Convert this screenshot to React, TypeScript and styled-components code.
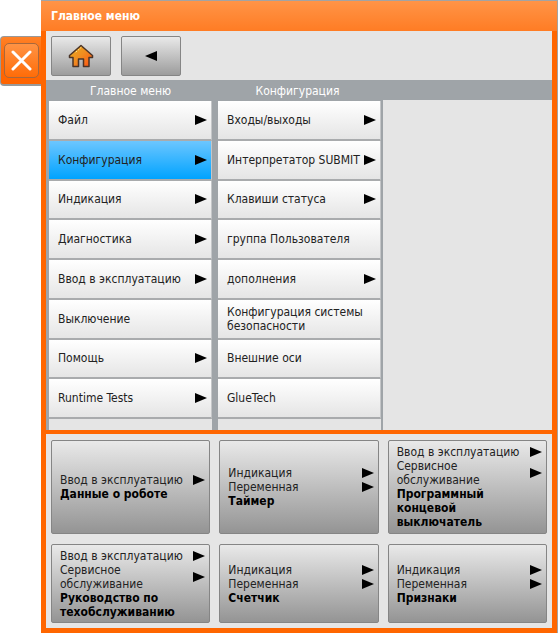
import React from "react";
import styled, { createGlobalStyle } from "styled-components";

const Global = createGlobalStyle`
  *, *::before, *::after { box-sizing: border-box; }
  body {
    margin: 0;
    background: #fff;
    color: #222;
    font-family: "DejaVu Sans Condensed", "Noto Sans", sans-serif;
    font-size: 12px;
    line-height: 14px;
  }
  button { font: inherit; color: inherit; cursor: pointer; }
`;

const Page = styled.div`
  display: flex;
  align-items: flex-start;
  min-height: 100vh;
`;

const CloseTab = styled.div`
  flex: none;
  width: 41px;
  margin-top: 36px;
  padding: 6px 2px 6px 3px;
  border: solid #999;
  border-width: 1px 0 2px 1px;
  border-radius: 4px 0 0 4px;
  background: linear-gradient(#ff8228, #ff6a08 40%, #ff6400);
`;

const CloseButton = styled.button`
  display: grid;
  place-items: center;
  width: 35px;
  height: 35px;
  padding: 0;
  border: 1px solid #a8683c;
  border-radius: 5px;
  background: linear-gradient(#ff9344, #ff6c08);
`;

const Panel = styled.main`
  flex: 1;
  min-width: 0;
  min-height: 100vh;
  display: flex;
  flex-direction: column;
  border: solid #a3a3a3;
  border-width: 1px 1px 0 0;
  background: #ff6600;
`;

const TitleBar = styled.h1`
  margin: 0;
  height: 30px;
  padding: 7px 10px;
  background: linear-gradient(#ff9447, #ff7c24);
  color: #fff;
  font-size: 12px;
  line-height: 16px;
  font-weight: 700;
`;

const Body = styled.div`
  flex: 1;
  display: flex;
  flex-direction: column;
  gap: 4px;
  padding: 0 5px;
  border-bottom: 5px solid #ff6600;
`;

const MenuArea = styled.section`
  flex: 1;
  display: flex;
  flex-direction: column;
  background: #e5e5e5;
`;

const Toolbar = styled.div`
  display: flex;
  gap: 10px;
  padding: 5px 5px 4px;
`;

const ToolButton = styled.button`
  display: grid;
  place-items: center;
  width: 60px;
  height: 40px;
  padding: 0;
  border: 1px solid #858585;
  border-radius: 2px;
  background: linear-gradient(#e9e9e9, #9c9c9c);
`;

const Columns = styled.div`
  flex: 1;
  display: grid;
  grid-template-columns: 169fr 165fr 169fr;
  grid-template-rows: 20px 1fr;
  padding-left: 3px;
  background: #9fa4a8;
`;

const ColumnTitle = styled.h2`
  margin: 0;
  padding-right: 6px;
  color: #fff;
  font-size: 12px;
  line-height: 22px;
  font-weight: 400;
  text-align: center;
`;

const Column = styled.div<{ $divider: number }>`
  border-right: ${(p) => p.$divider}px solid #9fa4a8;
  background: #e5e5e5;
`;

const MenuList = styled.div`
  display: grid;
  grid-auto-rows: 1fr;
  height: 319px;
  border-top: 1px solid #9fa4a8;
`;

const MenuButton = styled.button<{ $active?: boolean }>`
  display: flex;
  align-items: center;
  justify-content: space-between;
  gap: 2px;
  min-width: 0;
  padding: 0 4px 0 9px;
  border: solid #a9abad;
  border-width: 0 1px 2px 0;
  border-right-color: #c4c6c8;
  background: ${(p) =>
    p.$active ? "linear-gradient(#6cc6ff, #00a3ff)" : "linear-gradient(#ffffff, #e5e5e5)"};
  text-align: left;
`;

const Shortcuts = styled.section`
  display: grid;
  grid-template-columns: repeat(3, 1fr);
  grid-template-rows: 94px 79px;
  gap: 10px 9px;
  padding: 6px 5px 5px;
  background: #e5e5e5;
`;

const Card = styled.button`
  display: flex;
  flex-direction: column;
  justify-content: center;
  min-width: 0;
  padding: 0 4px 0 8px;
  border: 1px solid #858585;
  border-radius: 2px;
  background: linear-gradient(#e9e9e9, #949494);
  text-align: left;
`;

const PathLine = styled.span`
  display: flex;
  align-items: center;
  justify-content: space-between;
  width: 100%;
  gap: 8px;
`;

const Target = styled.strong`
  max-width: 128px;
  color: #000;
`;

const ArrowIcon = styled.svg`
  flex: none;
  display: block;
`;

const Arrow = ({ left = false }: { left?: boolean }) => (
  <ArrowIcon width="12" height="10" viewBox="0 0 12 10" aria-hidden="true">
    <path d={left ? "M12 0v10L0 5z" : "M0 0v10l12-5z"} fill="#000" />
  </ArrowIcon>
);

const HomeIcon = () => (
  <svg width="26" height="24" viewBox="0 0 26 24" aria-hidden="true">
    <defs>
      <linearGradient id="roof" x1="0" y1="0" x2="1" y2="1">
        <stop offset="0" stopColor="#e8b020" />
        <stop offset="0.5" stopColor="#f08c20" />
        <stop offset="1" stopColor="#ff4e10" />
      </linearGradient>
    </defs>
    <path
      d="M13 1.500 1.500 11.500V13.500H5V22.500H10.500V15H15.500V22.500H21V13.500H24.500V11.500Z"
      fill="url(#roof)"
      stroke="#4a3428"
      strokeWidth="1.500"
      strokeLinejoin="round"
    />
    <path d="m8 8 5-4.500" stroke="#ffe894" strokeWidth="1" strokeLinecap="round" strokeDasharray="1 2" />
  </svg>
);

type Item = { label: string; sub?: boolean; active?: boolean };

const mainMenu: Item[] = [
  { label: "Файл", sub: true },
  { label: "Конфигурация", sub: true, active: true },
  { label: "Индикация", sub: true },
  { label: "Диагностика", sub: true },
  { label: "Ввод в эксплуатацию", sub: true },
  { label: "Выключение" },
  { label: "Помощь", sub: true },
  { label: "Runtime Tests", sub: true },
];

const configMenu: Item[] = [
  { label: "Входы/выходы", sub: true },
  { label: "Интерпретатор SUBMIT", sub: true },
  { label: "Клавиши статуса", sub: true },
  { label: "группа Пользователя" },
  { label: "дополнения", sub: true },
  { label: "Конфигурация системы безопасности" },
  { label: "Внешние оси" },
  { label: "GlueTech" },
];

const shortcuts = [
  { path: ["Ввод в эксплуатацию"], target: "Данные о роботе" },
  { path: ["Индикация", "Переменная"], target: "Таймер" },
  { path: ["Ввод в эксплуатацию", "Сервисное обслуживание"], target: "Программный концевой выключатель" },
  { path: ["Ввод в эксплуатацию", "Сервисное обслуживание"], target: "Руководство по техобслуживанию" },
  { path: ["Индикация", "Переменная"], target: "Счетчик" },
  { path: ["Индикация", "Переменная"], target: "Признаки" },
];

const Menu = ({ items }: { items: Item[] }) => (
  <MenuList>
    {items.map((item) => (
      <MenuButton key={item.label} type="button" $active={item.active}>
        <span>{item.label}</span>
        {item.sub && <Arrow />}
      </MenuButton>
    ))}
  </MenuList>
);

export default function App() {
  return (
    <>
      <Global />
      <Page>
        <CloseTab>
          <CloseButton type="button" aria-label="Закрыть">
            <svg width="21" height="21" viewBox="0 0 21 21" aria-hidden="true">
              <path d="m2 2 17 17m0-17-17 17" stroke="#fff" strokeWidth="3" strokeLinecap="round" />
            </svg>
          </CloseButton>
        </CloseTab>
        <Panel>
          <TitleBar>Главное меню</TitleBar>
          <Body>
            <MenuArea>
              <Toolbar>
                <ToolButton type="button" aria-label="Главное меню">
                  <HomeIcon />
                </ToolButton>
                <ToolButton type="button" aria-label="Назад">
                  <Arrow left />
                </ToolButton>
              </Toolbar>
              <Columns>
                <ColumnTitle>Главное меню</ColumnTitle>
                <ColumnTitle>Конфигурация</ColumnTitle>
                <span />
                <Column $divider={6}>
                  <Menu items={mainMenu} />
                </Column>
                <Column $divider={2}>
                  <Menu items={configMenu} />
                </Column>
                <Column $divider={0} />
              </Columns>
            </MenuArea>
            <Shortcuts>
              {shortcuts.map((card) => (
                <Card key={card.target} type="button">
                  {card.path.map((part) => (
                    <PathLine key={part}>
                      <span>{part}</span>
                      <Arrow />
                    </PathLine>
                  ))}
                  <Target>{card.target}</Target>
                </Card>
              ))}
            </Shortcuts>
          </Body>
        </Panel>
      </Page>
    </>
  );
}
